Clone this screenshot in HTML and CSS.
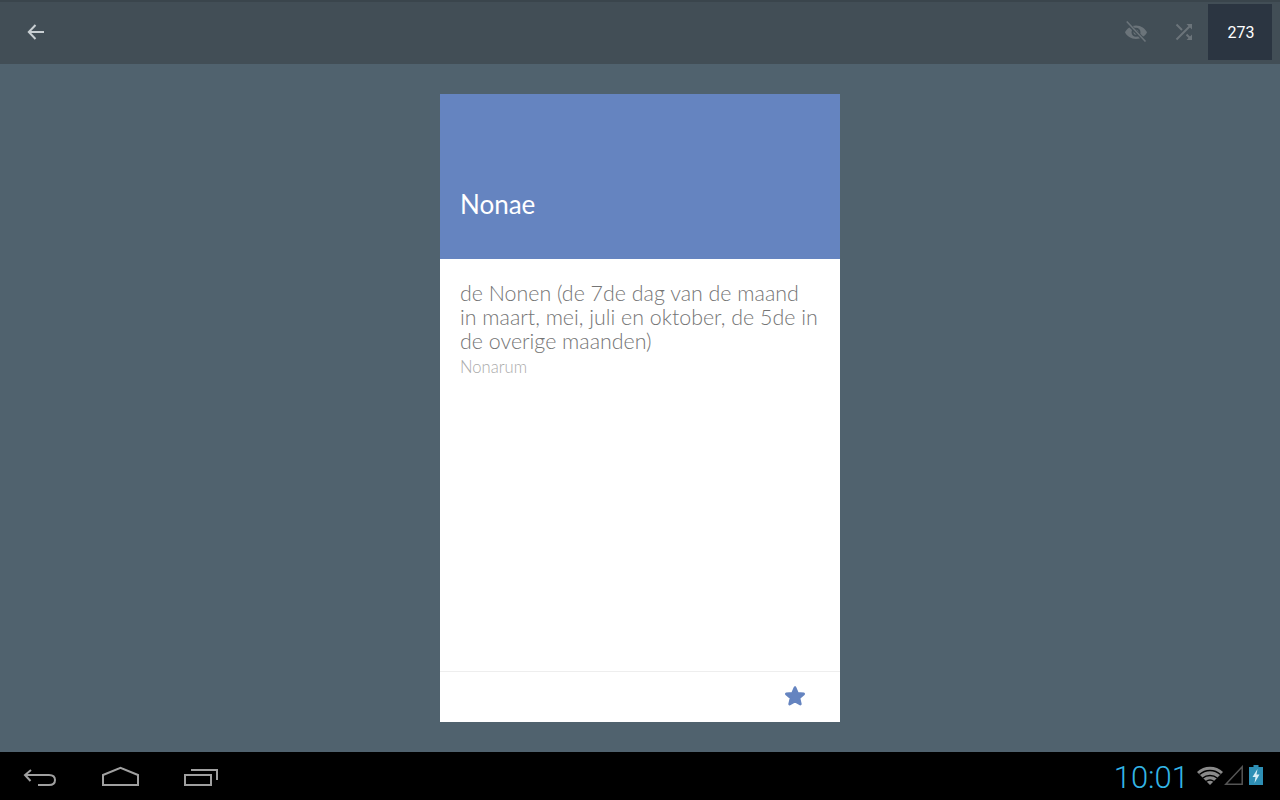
FILE: index.html
```html
<!DOCTYPE html>
<html lang="en">
<head>
  <meta charset="UTF-8" />
  <title>Nonae</title>
  <meta name="viewport" content="width=device-width, initial-scale=1.0" />
  <link rel="stylesheet" href="styles.css">
</head>
<body>
  <header class="toolbar">
    <button class="tool back" aria-label="Back">
      <svg width="24" height="24" viewBox="0 0 24 24"><path d="M20 12H5.500M11.500 5L4.800 12l6.700 7" fill="none" stroke="#c9cfd3" stroke-width="2"/></svg>
    </button>
    <div class="tool-group">
      <button class="tool" aria-label="Hide">
        <svg width="24" height="24" viewBox="0 0 24 24">
          <path fill="#6b747a" fill-rule="evenodd" d="M12 5.500c5 0 9.200 3 11 6.800-1.800 3.800-6 6.700-11 6.700S2.800 16.100 1 12.300C2.800 8.500 7 5.500 12 5.500zm0 2.300a4.500 4.500 0 1 0 0 9 4.500 4.500 0 0 0 0-9zm0 2a2.500 2.500 0 1 1 0 5 2.500 2.500 0 0 1 0-5z"/>
          <path d="M3 2.500L21 21" stroke="#424e56" stroke-width="3.400"/>
          <path d="M2.800 1.500L21.500 21.500" stroke="#6b747a" stroke-width="1.600"/>
        </svg>
      </button>
      <button class="tool" aria-label="Shuffle">
        <svg width="24" height="24" viewBox="0 0 24 24">
          <path fill="none" stroke="#6b747a" stroke-width="2" d="M4.500 4.500l5.500 5.500M4.500 19.500L18.500 5.500M14.500 14.500l4.500 4.500"/>
          <path fill="#6b747a" d="M14.500 4H20v5.500zM20 20h-5.500l5.500-5.500z"/>
        </svg>
      </button>
      <div class="counter">273</div>
    </div>
  </header>

  <main class="stage">
    <article class="card">
      <div class="card-head">
        <h1 class="card-title">Nonae</h1>
      </div>
      <div class="card-body">
        <p class="meaning">de Nonen (de 7de dag van de maand in maart, mei, juli en oktober, de 5de in de overige maanden)</p>
        <p class="genitive">Nonarum</p>
      </div>
      <div class="card-foot">
        <svg class="star" width="24" height="24" viewBox="0 0 24 24"><path fill="#6584c0" stroke="#6584c0" stroke-width="2.600" stroke-linejoin="round" d="M12 3.500l2.500 5.800 6.200.6-4.700 4.100 1.400 6.100L12 17l-5.400 3.100L8 14 3.300 9.900l6.200-.6z"/></svg>
      </div>
    </article>
  </main>

  <footer class="navbar">
    <div class="nav-keys">
      <svg width="36" height="20" viewBox="0 0 36 20"><path fill="none" stroke="#a0a0a0" stroke-width="2" d="M9 4L3 9l5.500 6M3 9h24c4 0 6 2 6 5s-2 5-6 5H16"/></svg>
      <svg width="39" height="20" viewBox="0 0 39 20"><path fill="none" stroke="#a0a0a0" stroke-width="2" d="M2 19V9L19.500 1.800 37 9v10z"/></svg>
      <svg width="36" height="20" viewBox="0 0 36 20"><path fill="none" stroke="#a0a0a0" stroke-width="2" d="M2 9h26v10H2zM8 4h26v10"/></svg>
    </div>
    <div class="status">
      <span class="clock">10:01</span>
      <svg class="wifi" width="28" height="22" viewBox="0 0 28 22">
        <path fill="#8a8a8a" d="M14 20L1 7c7-7 19-7 26 0z"/>
        <path fill="none" stroke="#000" stroke-width="1.500" d="M3.500 9.500c6-5.500 15-5.500 21 0M6.800 13c4-3.500 10.400-3.500 14.400 0M10 16.500c2.500-1.800 5.500-1.800 8 0"/>
      </svg>
      <svg width="20" height="22" viewBox="0 0 20 22"><path fill="none" stroke="#555" stroke-width="1.500" d="M1.800 19.200L18.200 1.800v17.400z"/></svg>
      <svg class="battery" width="14" height="22" viewBox="0 0 14 22">
        <path fill="#2e8fb5" d="M4.500 0h5v2H14v18H0V2h4.500z"/>
        <path fill="#d8eef6" d="M8.500 4L3.500 12h3L5.500 18 10.500 9.500h-3z"/>
      </svg>
    </div>
  </footer>
</body>
</html>
```

FILE: styles.css
```css
* {
  box-sizing: border-box;
}
html, body {
  height: 100%;
}
body {
  margin: 0;
  display: flex;
  flex-direction: column;
  background: #50626e;
  font-family: 'Lato', sans-serif;
  overflow: hidden;
}
button {
  padding: 0;
  border: 0;
  background: none;
}
.toolbar {
  height: 64px;
  flex: none;
  display: flex;
  justify-content: space-between;
  align-items: center;
  padding: 0 8px 0 12px;
  background: #424e56;
  box-shadow: inset 0 2px 0 #3a454c;
}
.tool {
  width: 48px;
  height: 48px;
  display: flex;
  align-items: center;
  justify-content: center;
}
.tool-group {
  display: flex;
  align-items: center;
}
.counter {
  width: 64px;
  height: 56px;
  display: flex;
  align-items: center;
  justify-content: center;
  padding-left: 2px;
  background: #2b3541;
  color: #fff;
  font-family: 'Roboto', sans-serif;
  font-size: 16px;
}
.stage {
  flex: 1;
  display: flex;
  justify-content: center;
  padding: 30px 0;
}
.card {
  width: 400px;
  display: flex;
  flex-direction: column;
  background: #fff;
}
.card-head {
  height: 165px;
  display: flex;
  align-items: flex-end;
  padding: 0 20px 37px;
  background: #6584c0;
}
.card-title {
  margin: 0;
  color: #fff;
  font-size: 26px;
  font-weight: 400;
  line-height: 36px;
}
.card-body {
  flex: 1;
  padding: 22px 20px 0;
}
.meaning {
  margin: 0;
  color: #757575;
  font-size: 21.400px;
  font-weight: 300;
  line-height: 24px;
}
.genitive {
  margin: 3px 0 0;
  color: #aaa;
  font-size: 16.600px;
  font-weight: 300;
  line-height: 22px;
}
.card-foot {
  height: 51px;
  display: flex;
  align-items: center;
  justify-content: flex-end;
  padding: 0 33px 2px 0;
  border-top: 1px solid #eee;
}
.navbar {
  height: 48px;
  flex: none;
  display: flex;
  justify-content: space-between;
  align-items: center;
  padding: 0 17px 0 22px;
  background: #000;
}
.nav-keys {
  display: flex;
  align-items: center;
  gap: 43px;
}
.status {
  display: flex;
  align-items: center;
}
.clock {
  margin-right: 7px;
  padding-top: 2px;
  color: #33b5e5;
  font-family: 'Roboto', sans-serif;
  font-size: 31px;
  font-weight: 300;
}
.battery {
  margin-left: 5px;
}
```
